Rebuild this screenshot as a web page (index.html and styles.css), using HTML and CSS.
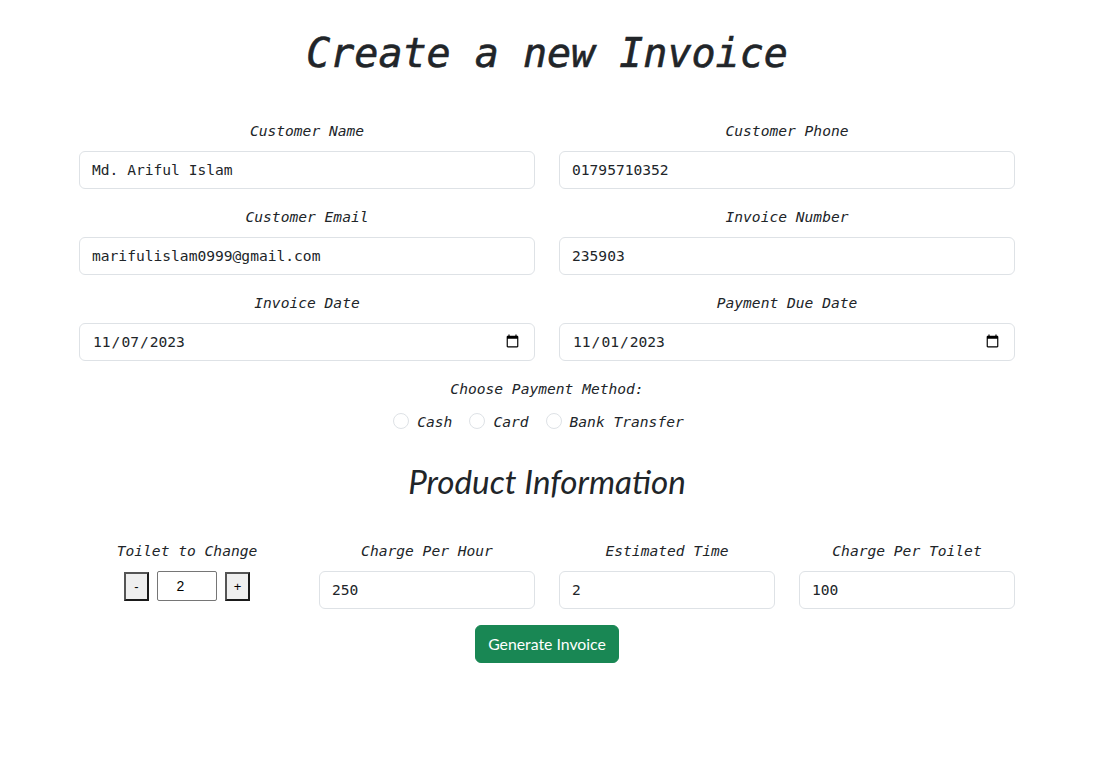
FILE: index.html
```html
<!DOCTYPE html>
<html lang="en">
<head>
<meta charset="utf-8">
<title>Create a new Invoice</title>
<link rel="stylesheet" href="styles.css">
</head>
<body>
<main class="page">
  <h1 class="title">Create a new Invoice</h1>
  <form class="invoice-form">
    <div class="grid-2">
      <div class="field">
        <label class="field-label" for="cname">Customer Name</label>
        <input class="form-input" id="cname" type="text" value="Md. Ariful Islam">
      </div>
      <div class="field">
        <label class="field-label" for="cphone">Customer Phone</label>
        <input class="form-input" id="cphone" type="text" value="01795710352">
      </div>
      <div class="field">
        <label class="field-label" for="cemail">Customer Email</label>
        <input class="form-input" id="cemail" type="text" value="marifulislam0999@gmail.com">
      </div>
      <div class="field">
        <label class="field-label" for="inum">Invoice Number</label>
        <input class="form-input" id="inum" type="text" value="235903">
      </div>
      <div class="field">
        <label class="field-label" for="idate">Invoice Date</label>
        <input class="form-input" id="idate" type="date" value="2023-11-07">
      </div>
      <div class="field">
        <label class="field-label" for="ddate">Payment Due Date</label>
        <input class="form-input" id="ddate" type="date" value="2023-11-01">
      </div>
    </div>

    <div class="payment">
      <div class="field-label">Choose Payment Method:</div>
      <div class="radio-row">
        <label class="radio-item"><span class="radio-circle"></span>Cash</label>
        <label class="radio-item"><span class="radio-circle"></span>Card</label>
        <label class="radio-item"><span class="radio-circle"></span>Bank Transfer</label>
      </div>
    </div>

    <h2 class="section-title">Product Information</h2>

    <div class="grid-4">
      <div class="field">
        <label class="field-label">Toilet to Change</label>
        <div class="stepper">
          <button type="button" class="step-btn">-</button>
          <input class="step-input" type="text" value="2">
          <button type="button" class="step-btn">+</button>
        </div>
      </div>
      <div class="field">
        <label class="field-label" for="cph">Charge Per Hour</label>
        <input class="form-input" id="cph" type="text" value="250">
      </div>
      <div class="field">
        <label class="field-label" for="et">Estimated Time</label>
        <input class="form-input" id="et" type="text" value="2">
      </div>
      <div class="field">
        <label class="field-label" for="cpt">Charge Per Toilet</label>
        <input class="form-input" id="cpt" type="text" value="100">
      </div>
    </div>

    <div class="actions">
      <button type="button" class="btn-success">Generate Invoice</button>
    </div>
  </form>
</main>
</body>
</html>
```

FILE: styles.css
```css
* { box-sizing: border-box; }

html, body {
  margin: 0;
  padding: 0;
  background: #fff;
  color: #212529;
}

body {
  font-family: "DejaVu Sans Mono", "Liberation Mono", monospace;
  font-size: 14.6px;
}

.page {
  width: 936px;
  margin-left: 79px;
  padding-top: 29px;
}

.title {
  margin: 0 0 42px;
  font-family: "DejaVu Sans Mono", monospace;
  font-style: italic;
  font-weight: 500;
  font-size: 40px;
  line-height: 48px;
  text-align: center;
  color: #212529;
  -webkit-text-stroke: 0.6px #212529;
}

.grid-2 {
  display: grid;
  grid-template-columns: 1fr 1fr;
  column-gap: 24px;
}

.grid-4 {
  display: grid;
  grid-template-columns: repeat(4, 1fr);
  column-gap: 24px;
}

.field {
  display: flex;
  flex-direction: column;
  margin-bottom: 16px;
}

.field-label {
  display: block;
  font-style: italic;
  font-size: 14.6px;
  line-height: 24px;
  text-align: center;
  margin-bottom: 8px;
}

.form-input {
  display: block;
  width: 100%;
  height: 38px;
  padding: 5px 12px 7px;
  font-family: "DejaVu Sans Mono", monospace;
  font-size: 14.6px;
  color: #212529;
  background: #fff;
  border: 1px solid #dee2e6;
  border-radius: 6px;
  outline: none;
}

.payment {
  text-align: center;
}

.radio-row {
  display: flex;
  justify-content: center;
  align-items: center;
  height: 24px;
  font-style: italic;
}

.radio-item {
  display: inline-flex;
  align-items: center;
  margin-right: 17px;
}

.radio-circle {
  width: 16px;
  height: 16px;
  border-radius: 50%;
  border: 1px solid #dee2e6;
  margin-right: 8px;
  background: #fff;
}

.section-title {
  margin: 29px 0 39px;
  font-family: "Lato", "Noto Sans", sans-serif;
  font-style: italic;
  font-weight: 400;
  font-size: 33.2px;
  line-height: 38px;
  text-align: center;
  color: #212529;
}

.stepper {
  display: flex;
  justify-content: center;
  align-items: center;
  gap: 8px;
  height: 38px;
  padding-bottom: 8px;
}

.step-btn {
  width: 25px;
  height: 29px;
  padding: 0;
  font-family: "Liberation Sans", Arial, sans-serif;
  font-size: 13px;
  color: #000;
  background: #efefef;
  border: 2px solid #1a1a1a;
  border-top-color: #555;
  border-left-color: #555;
  border-radius: 0;
}

.step-input {
  width: 60px;
  height: 30px;
  padding: 1px 15px 1px 2px;
  text-align: center;
  font-family: "Liberation Sans", Arial, sans-serif;
  font-size: 14px;
  color: #000;
  border: 1px solid #767676;
  border-radius: 2px;
  outline: none;
}

.actions {
  display: flex;
  justify-content: center;
}

.btn-success {
  height: 38px;
  padding: 6px 12px;
  font-family: "Lato", "Noto Sans", sans-serif;
  font-size: 15.8px;
  line-height: 24px;
  color: #fff;
  background: #198754;
  border: 1px solid #198754;
  border-radius: 6px;
}
```
